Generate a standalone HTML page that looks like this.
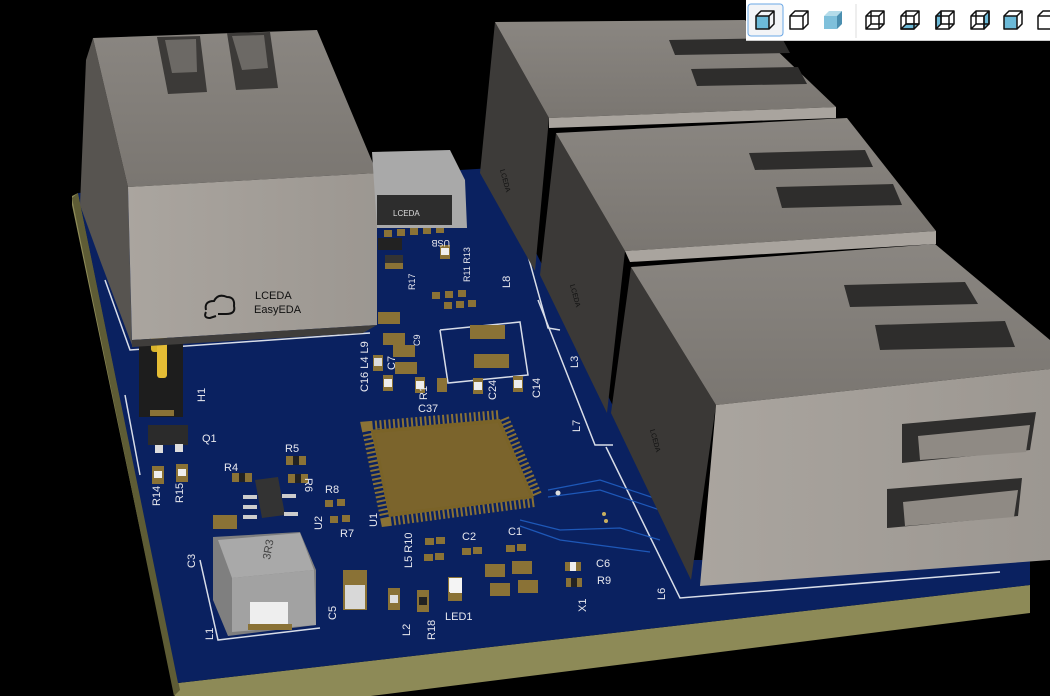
<!DOCTYPE html>
<html><head><meta charset="utf-8"><style>
html,body{margin:0;padding:0;background:#000;width:1050px;height:696px;overflow:hidden}
svg{position:absolute;left:0;top:0}
.tb{position:absolute;left:746px;top:0;width:304px;height:40px;background:#fff;border-bottom:1px solid #ccc}
</style></head><body>
<svg width="1050" height="696" viewBox="0 0 1050 696" font-family="Liberation Sans, sans-serif">
<defs>
<linearGradient id="gTop" x1="0" y1="0" x2="0" y2="1"><stop offset="0" stop-color="#8a8681"/><stop offset="1" stop-color="#7a7671"/></linearGradient>
<linearGradient id="gFront" x1="0" y1="0" x2="1" y2="0"><stop offset="0" stop-color="#aaa59f"/><stop offset="1" stop-color="#9c9791"/></linearGradient>
</defs>
<!-- board thickness -->
<polygon points="72,196 78,193 178,683 1030,585 1030,613 180,720 72,205" fill="#8d8a57"/>
<polygon points="72,198 78,193 180,690 174,696" fill="#5e5c35"/>
<!-- board top -->
<polygon points="78,193 493,168 560,300 690,560 1030,560 1030,585 178,683" fill="#0a2160"/>
<!-- silkscreen outlines -->
<g fill="none" stroke="#d8dde8" stroke-width="1.5">
<polyline points="105,280 130,350 370,333"/>
<polyline points="525,245 548,328 560,330"/>
<polyline points="538,300 595,445 613,445"/>
<polyline points="606,447 680,598 1000,572"/>
<polyline points="440,330 520,322 528,375 448,383 440,330"/>
<polyline points="125,395 140,475"/>
<polyline points="200,560 218,640 320,628"/>
</g>
<!-- traces -->
<g fill="none" stroke="#1e58b8" stroke-width="1.2">
<path d="M548,490 L600,480 L660,500"/><path d="M548,497 L600,490 L660,510"/>
<path d="M520,520 L560,530 L620,528 L660,540"/><path d="M520,526 L560,540 L650,552"/>
</g>
<circle cx="558" cy="493" r="2.5" fill="#ddd"/>
<circle cx="604" cy="514" r="2" fill="#c9b060"/><circle cx="606" cy="521" r="2" fill="#c9b060"/>
<!-- QFP -->
<polygon points="371,430 500,419 534,498 389,517" fill="none" stroke="#8a7236" stroke-width="18" stroke-dasharray="2 2.5"/>
<polygon points="371,430 500,419 534,498 389,517" fill="#7a6328"/>
<polygon points="375,433 498,423 530,496 391,513" fill="#7b642c"/>
<!-- pads / parts -->
<g fill="#8a7236">
<rect x="485" y="564" width="20" height="13"/><rect x="512" y="561" width="20" height="13"/>
<rect x="490" y="583" width="20" height="13"/><rect x="518" y="580" width="20" height="13"/>
<rect x="470" y="325" width="35" height="14"/><rect x="474" y="354" width="35" height="14"/>
<rect x="378" y="312" width="22" height="12"/><rect x="383" y="333" width="22" height="12"/>
<rect x="393" y="345" width="22" height="12"/><rect x="395" y="362" width="22" height="12"/>
<rect x="432" y="292" width="8" height="7"/><rect x="445" y="291" width="8" height="7"/><rect x="458" y="290" width="8" height="7"/>
<rect x="444" y="302" width="8" height="7"/><rect x="456" y="301" width="8" height="7"/><rect x="468" y="300" width="8" height="7"/>
<rect x="384" y="230" width="8" height="7"/><rect x="397" y="229" width="8" height="7"/><rect x="410" y="228" width="8" height="7"/><rect x="423" y="227" width="8" height="7"/><rect x="436" y="226" width="8" height="7"/>
<rect x="425" y="538" width="9" height="7"/><rect x="436" y="537" width="9" height="7"/>
<rect x="424" y="554" width="9" height="7"/><rect x="435" y="553" width="9" height="7"/>
<rect x="462" y="548" width="9" height="7"/><rect x="473" y="547" width="9" height="7"/>
<rect x="506" y="545" width="9" height="7"/><rect x="517" y="544" width="9" height="7"/>
<rect x="325" y="500" width="8" height="7"/><rect x="337" y="499" width="8" height="7"/>
<rect x="330" y="516" width="8" height="7"/><rect x="342" y="515" width="8" height="7"/>
</g>
<g fill="#8a7236"><rect x="343" y="570" width="24" height="40"/><rect x="213" y="515" width="24" height="14"/></g>
<rect x="345" y="585" width="20" height="24" fill="#d8d8d8"/>
<!-- small chips -->
<g>
<rect x="388" y="588" width="12" height="22" fill="#8a7236"/><rect x="390" y="595" width="8" height="8" fill="#e0e0e0"/>
<rect x="417" y="590" width="12" height="22" fill="#8a7236"/><rect x="419" y="597" width="8" height="8" fill="#222"/>
<rect x="448" y="577" width="14" height="24" fill="#8a7236"/><rect x="449" y="578" width="12" height="14" fill="#eee"/>
<rect x="565" y="562" width="16" height="9" fill="#8a7236"/><rect x="570" y="562" width="6" height="9" fill="#eee"/>
<rect x="566" y="578" width="16" height="9" fill="#8a7236"/><rect x="571" y="578" width="6" height="9" fill="#222"/>
<rect x="152" y="466" width="12" height="18" fill="#8a7236"/><rect x="154" y="471" width="8" height="7" fill="#eee"/>
<rect x="176" y="464" width="12" height="18" fill="#8a7236"/><rect x="178" y="469" width="8" height="7" fill="#eee"/>
<rect x="232" y="473" width="20" height="9" fill="#8a7236"/><rect x="239" y="473" width="6" height="9" fill="#222"/>
<rect x="286" y="456" width="20" height="9" fill="#8a7236"/><rect x="293" y="456" width="6" height="9" fill="#222"/>
<rect x="288" y="474" width="20" height="9" fill="#8a7236"/><rect x="295" y="474" width="6" height="9" fill="#222"/>
<rect x="373" y="355" width="10" height="16" fill="#8a7236"/><rect x="374" y="358" width="8" height="8" fill="#ddd"/>
<rect x="383" y="375" width="10" height="16" fill="#8a7236"/><rect x="384" y="379" width="8" height="8" fill="#eee"/>
<rect x="415" y="377" width="10" height="16" fill="#8a7236"/><rect x="416" y="381" width="8" height="8" fill="#eee"/>
<rect x="473" y="378" width="10" height="16" fill="#8a7236"/><rect x="474" y="382" width="8" height="8" fill="#eee"/>
<rect x="513" y="376" width="10" height="16" fill="#8a7236"/><rect x="514" y="380" width="8" height="8" fill="#eee"/>
<rect x="437" y="378" width="10" height="14" fill="#8a7236"/>
<rect x="440" y="245" width="10" height="14" fill="#8a7236"/><rect x="441" y="248" width="8" height="7" fill="#eee"/>
<rect x="385" y="255" width="18" height="14" fill="#8a7236"/><rect x="385" y="255" width="18" height="8" fill="#333"/>
<rect x="378" y="238" width="24" height="12" fill="#222"/>
</g>
<!-- Q1, U2 -->
<rect x="148" y="425" width="40" height="20" fill="#2b2b2b"/>
<rect x="155" y="445" width="8" height="8" fill="#ddd"/><rect x="175" y="444" width="8" height="8" fill="#ddd"/>
<polygon points="255,480 278,477 285,515 262,518" fill="#333"/>
<g fill="#ccc"><rect x="243" y="495" width="14" height="4"/><rect x="243" y="505" width="14" height="4"/><rect x="243" y="515" width="14" height="4"/><rect x="282" y="494" width="14" height="4"/><rect x="284" y="512" width="14" height="4"/></g>
<!-- inductor 3R3 -->
<polygon points="213,537 300,532 316,570 316,625 228,636 213,600" fill="#7f7f7f"/>
<polygon points="218,540 300,533 314,570 232,578" fill="#a9a9a9"/>
<polygon points="232,578 314,570 316,625 232,632" fill="#a2a2a2"/>
<rect x="250" y="602" width="38" height="24" fill="#eee"/>
<rect x="248" y="624" width="44" height="6" fill="#8a7236"/>
<text x="270" y="560" font-size="11" fill="#444" transform="rotate(-80 270 560)">3R3</text>
<rect x="450" y="578" width="12" height="15" fill="#f4f4f4"/>
<!-- header H1 -->
<rect x="139" y="342" width="44" height="75" fill="#1d1d1d"/>
<rect x="150" y="410" width="24" height="6" fill="#8a7236"/>
<rect x="151" y="272" width="9" height="80" fill="#d8b32c" rx="3"/>
<rect x="157" y="293" width="10" height="85" fill="#e5bd35" rx="3"/>
<!-- left jack -->
<polygon points="86,60 93,38 128,187 132,345 100,260 80,205" fill="#575450"/>
<polygon points="93,38 317,30 377,173 128,187" fill="url(#gTop)"/>
<polygon points="157,37 200,36 207,92 168,94" fill="#3c3a38"/><polygon points="227,33 270,32 278,88 236,90" fill="#3c3a38"/>
<polygon points="165,40 196,39 197,72 172,73" fill="#6c6965"/><polygon points="232,36 264,35 268,68 242,70" fill="#6c6965"/>
<polygon points="128,187 377,173 377,325 132,340" fill="url(#gFront)"/>
<polygon points="132,340 377,325 363,333 132,347" fill="#3f3d3b"/>
<text x="255" y="299" font-size="11" fill="#111">LCEDA</text>
<text x="254" y="313" font-size="11" fill="#111">EasyEDA</text>
<path d="M206,310 q-2,-9 8,-9 q4,-8 13,-4 q8,0 7,9 q2,8 -8,8 l-8,0 m-12,-2 q-3,6 4,6 l6,-2" fill="none" stroke="#111" stroke-width="2"/>
<!-- USB -->
<polygon points="372,152 450,150 465,180 467,228 377,228" fill="#a9a9a9"/>
<rect x="377" y="195" width="75" height="30" fill="#2d2d2d"/>
<text x="393" y="216" font-size="8" fill="#ddd">LCEDA</text>
<!-- right jacks -->
<polygon points="480,173 495,22 549,118 535,271" fill="#3d3b39"/>
<polygon points="495,22 745,20 836,107 549,118" fill="url(#gTop)"/>
<polygon points="549,118 836,107 836,118 549,128" fill="#a9a49e"/>
<polygon points="669,40 782,38 790,53 675,55" fill="#2e2d2c"/><polygon points="691,69 798,67 807,84 697,86" fill="#2e2d2c"/>
<polygon points="540,275 556,133 625,251 607,413" fill="#3b3937"/>
<polygon points="556,133 847,118 936,231 625,251" fill="url(#gTop)"/>
<polygon points="625,251 936,231 936,244 630,262" fill="#a9a49e"/>
<polygon points="749,153 865,150 873,167 755,170" fill="#2e2d2c"/><polygon points="776,187 893,184 902,205 782,208" fill="#2e2d2c"/>
<polygon points="611,413 631,267 716,405 691,580" fill="#3a3836"/>
<polygon points="631,267 935,244 1050,340 1050,369 716,405" fill="url(#gTop)"/>
<polygon points="844,285 965,282 978,304 850,307" fill="#2e2d2c"/><polygon points="875,325 1005,321 1015,347 880,350" fill="#2e2d2c"/>
<polygon points="716,405 1050,369 1050,560 700,586" fill="url(#gFront)"/>
<polygon points="902,424 1036,412 1030,450 902,463" fill="#2f2e2d"/>
<polygon points="918,436 1030,425 1026,452 920,460" fill="#8f8a84"/>
<polygon points="887,489 1022,478 1018,516 887,528" fill="#2f2e2d"/>
<polygon points="903,502 1018,490 1014,517 905,526" fill="#8f8a84"/>
<g fill="#111" font-size="7">
<text transform="translate(500,170) rotate(75)">LCEDA</text>
<text transform="translate(570,285) rotate(75)">LCEDA</text>
<text transform="translate(650,430) rotate(75)">LCEDA</text>
</g>
<!-- silk labels -->
<g fill="#e8e8ee" font-size="11">
<text x="202" y="442">Q1</text><text x="285" y="452">R5</text><text x="224" y="471">R4</text>
<text x="325" y="493">R8</text><text x="340" y="537">R7</text><text x="462" y="540">C2</text><text x="508" y="535">C1</text>
<text x="596" y="567">C6</text><text x="597" y="584">R9</text><text x="445" y="620">LED1</text>
<text x="418" y="412">C37</text>
<text transform="translate(160,506) rotate(-90)">R14</text><text transform="translate(183,503) rotate(-90)">R15</text>
<text transform="translate(195,568) rotate(-90)">C3</text><text transform="translate(213,640) rotate(-90)">L1</text>
<text transform="translate(336,620) rotate(-90)">C5</text><text transform="translate(410,636) rotate(-90)">L2</text>
<text transform="translate(435,640) rotate(-90)">R18</text><text transform="translate(586,612) rotate(-90)">X1</text>
<text transform="translate(305,478) rotate(90)">R6</text><text transform="translate(322,530) rotate(-90)">U2</text>
<text transform="translate(377,527) rotate(-90)">U1</text><text transform="translate(412,568) rotate(-90)">L5 R10</text>
<text transform="translate(205,402) rotate(-90)">H1</text>
<text transform="translate(368,392) rotate(-90)">C16 L4 L9</text>
<text transform="translate(395,370) rotate(-90)">C7</text><text transform="translate(427,400) rotate(-90)">R1</text>
<text transform="translate(496,400) rotate(-90)">C24</text><text transform="translate(540,398) rotate(-90)">C14</text>
<text transform="translate(578,368) rotate(-90)">L3</text><text transform="translate(510,288) rotate(-90)">L8</text>
<text transform="translate(580,432) rotate(-90)">L7</text><text transform="translate(665,600) rotate(-90)">L6</text>
<text transform="translate(415,290) rotate(-90)" font-size="9">R17</text>
<text transform="translate(470,282) rotate(-90)" font-size="9">R11 R13</text>
<text transform="translate(420,346) rotate(-90)" font-size="9">C9</text>
<text transform="translate(450,240) rotate(180)" font-size="9">USB</text>
</g>
</svg>
<div class="tb">
<svg width="304" height="40" viewBox="0 0 304 40" style="position:relative">
<rect x="2" y="4" width="35" height="32" rx="3" fill="#f2f4f7" stroke="#6aa7e6"/>
<line x1="110" y1="4" x2="110" y2="38" stroke="#ddd"/>
<g stroke="#111" stroke-width="1.5" fill="none" stroke-linejoin="round">
<g transform="translate(10,11)"><path d="M0,5 h13 v13 h-13 z" fill="#6cbad8"/><path d="M0,5 l5,-5 h13 l-5,5 M13,5 l5,-5 v13 l-5,5"/></g>
<g transform="translate(44,11)"><path d="M0,5 h13 v13 h-13 z M0,5 l5,-5 h13 l-5,5 M13,5 l5,-5 v13 l-5,5"/></g>
<g transform="translate(78,11)" stroke="none"><path d="M0,5 h13 v13 h-13 z" fill="#7fc0db"/><path d="M0,5 l5,-5 h13 l-5,5 z" fill="#b4dcea"/><path d="M13,5 l5,-5 v13 l-5,5 z" fill="#4b8fb0"/></g>
<g transform="translate(120,11)"><path d="M0,5 h13 v13 h-13 z M5,0 h13 v13 h-13 z M0,5 l5,-5 M13,5 l5,-5 M13,18 l5,-5 M0,18 l5,-5"/></g>
<g transform="translate(155,11)"><path d="M0,18 l5,-5 h13 l-5,5 z" fill="#6cbad8"/><path d="M0,5 h13 v13 h-13 z M5,0 h13 v13 h-13 z M0,5 l5,-5 M13,5 l5,-5"/></g>
<g transform="translate(190,11)"><path d="M0,5 l5,-5 v13 l-5,5 z" fill="#6cbad8"/><path d="M0,5 h13 v13 h-13 z M5,0 h13 v13 h-13 z M13,5 l5,-5 M13,18 l5,-5"/></g>
<g transform="translate(225,11)"><path d="M13,5 l5,-5 v13 l-5,5 z" fill="#6cbad8"/><path d="M0,5 h13 v13 h-13 z M5,0 h13 v13 h-13 z M0,5 l5,-5 M0,18 l5,-5"/></g>
<g transform="translate(258,11)"><path d="M0,5 h13 v13 h-13 z" fill="#6cbad8"/><path d="M0,5 l5,-5 h13 l-5,5 M13,5 l5,-5 v13 l-5,5"/></g>
<g transform="translate(292,11)"><path d="M0,5 h13 v13 h-13 z M0,5 l5,-5 h13"/></g>
</g>
</svg>
</div>
</body></html>
